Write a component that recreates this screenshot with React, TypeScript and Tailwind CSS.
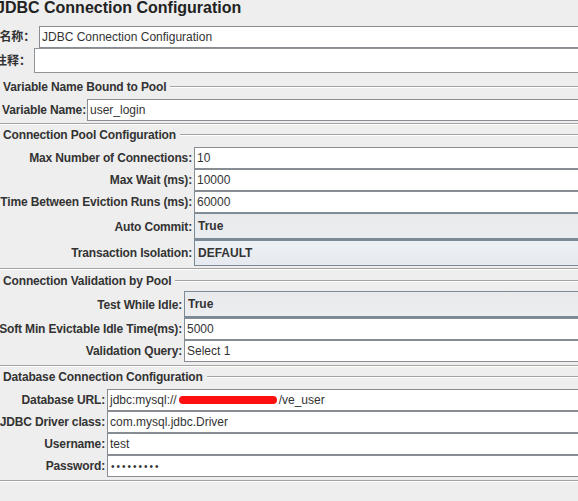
import type { ReactNode } from 'react'

const Label = ({ text, width }: { text: string; width: string }) => (
  <div
    className={`${width} flex shrink-0 justify-end whitespace-nowrap text-[12px] font-bold tracking-[-0.15px] text-[#333]`}
  >
    {text}
  </div>
)

const TextBox = ({ children }: { children?: ReactNode }) => (
  <div className="flex h-[22px] flex-1 items-center overflow-hidden whitespace-nowrap border-y border-l border-[#878d93] bg-white pl-[2px] text-[12px] text-[#333]">
    {children}
  </div>
)

const Combo = ({ value, variant }: { value: string; variant: 'gray' | 'blue' }) => (
  <div
    className={`flex flex-1 items-center border-l border-[#7b8a97] pl-[3px] text-[12px] font-bold text-[#333] ${
      variant === 'gray'
        ? 'h-[27px] border-t border-b-2 bg-gradient-to-b from-[#e9eaec] to-[#ebedf0]'
        : 'h-[26px] border-y bg-gradient-to-b from-[#edf0f3] to-[#e6eaf0]'
    }`}
  >
    {value}
  </div>
)

const Row = ({
  label,
  width,
  gap,
  children,
}: {
  label: string
  width: string
  gap: string
  children: ReactNode
}) => (
  <div className={`flex items-center ${gap}`}>
    <Label text={label} width={width} />
    {children}
  </div>
)

const Group = ({
  title,
  className,
  bodyClass,
  children,
}: {
  title: string
  className: string
  bodyClass: string
  children: ReactNode
}) => (
  <section className={className}>
    <div className="flex h-[14px] items-center gap-[4px] pl-[3px]">
      <span className="whitespace-nowrap text-[12px] font-bold leading-[14px] tracking-[-0.15px] text-[#333]">
        {title}
      </span>
      <div className="flex flex-1 flex-col">
        <div className="h-px bg-[#a3a3a3]" />
        <div className="h-px bg-white" />
      </div>
    </div>
    <div className={`flex flex-col ${bodyClass}`}>{children}</div>
    <div className="h-px bg-[#a3a3a3]" />
    <div className="h-px bg-white" />
  </section>
)

export default function App() {
  return (
    <div className="h-[501px] w-[578px] overflow-hidden bg-[#eeeeee] font-['Liberation_Sans','Noto_Sans_CJK_SC',Arial,sans-serif] text-[#333]">
      <h1 className="ml-[-4px] h-[26px] whitespace-nowrap text-[16px] font-bold leading-[16px] text-[#222]">
        JDBC Connection Configuration
      </h1>

      <div className="flex items-center gap-[4px]">
        <Label text="名称：" width="w-[35px]" />
        <TextBox>JDBC Connection Configuration</TextBox>
      </div>
      <div className="flex h-[25px] items-stretch gap-[3px]">
        <div className="flex w-[31px] shrink-0 items-center justify-end whitespace-nowrap text-[12px] font-bold">
          注释：
        </div>
        <div className="flex-1 border-y border-l border-[#8f9499] bg-white" />
      </div>

      <Group title="Variable Name Bound to Pool" className="mt-[7px]" bodyClass="mt-[5px] pb-[2px]">
        <Row label="Variable Name:" width="w-[86px]" gap="gap-[1px]">
          <TextBox>user_login</TextBox>
        </Row>
      </Group>

      <Group title="Connection Pool Configuration" className="mt-[3px]" bodyClass="mt-[5px] pb-[2px]">
        <Row label="Max Number of Connections:" width="w-[192px]" gap="gap-[2px]">
          <TextBox>10</TextBox>
        </Row>
        <Row label="Max Wait (ms):" width="w-[192px]" gap="gap-[2px]">
          <TextBox>10000</TextBox>
        </Row>
        <Row label="Time Between Eviction Runs (ms):" width="w-[192px]" gap="gap-[2px]">
          <TextBox>60000</TextBox>
        </Row>
        <Row label="Auto Commit:" width="w-[192px]" gap="gap-[2px]">
          <Combo value="True" variant="gray" />
        </Row>
        <Row label="Transaction Isolation:" width="w-[192px]" gap="gap-[2px]">
          <Combo value="DEFAULT" variant="blue" />
        </Row>
      </Group>

      <Group title="Connection Validation by Pool" className="mt-[4px]" bodyClass="mt-[3px] pb-[3px]">
        <Row label="Test While Idle:" width="w-[182px]" gap="gap-[2px]">
          <Combo value="True" variant="gray" />
        </Row>
        <Row label="Soft Min Evictable Idle Time(ms):" width="w-[182px]" gap="gap-[2px]">
          <TextBox>5000</TextBox>
        </Row>
        <Row label="Validation Query:" width="w-[182px]" gap="gap-[2px]">
          <TextBox>Select 1</TextBox>
        </Row>
      </Group>

      <Group title="Database Connection Configuration" className="mt-[3px]" bodyClass="mt-[5px] pb-[3px]">
        <Row label="Database URL:" width="w-[105px]" gap="gap-[2px]">
          <TextBox>
            jdbc:mysql://
            <span className="mx-[2px] inline-block h-[8px] w-[98px] rounded-full bg-[#ff1010]" />
            /ve_user
          </TextBox>
        </Row>
        <Row label="JDBC Driver class:" width="w-[105px]" gap="gap-[2px]">
          <TextBox>com.mysql.jdbc.Driver</TextBox>
        </Row>
        <Row label="Username:" width="w-[105px]" gap="gap-[2px]">
          <TextBox>test</TextBox>
        </Row>
        <Row label="Password:" width="w-[105px]" gap="gap-[2px]">
          <TextBox>
            <span className="pl-[1px] text-[10px] tracking-[2px]">•••••••••</span>
          </TextBox>
        </Row>
      </Group>
    </div>
  )
}
